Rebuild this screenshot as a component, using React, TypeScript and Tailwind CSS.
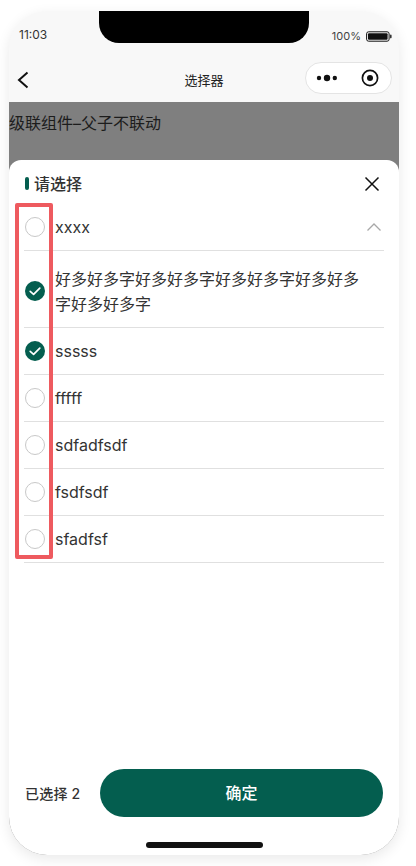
import React from "react";

const font = { fontFamily: 'Inter, "Noto Sans CJK SC", sans-serif' };

function Radio({ checked }: { checked?: boolean }) {
  if (checked) {
    return (
      <svg width="20" height="20" viewBox="0 0 20 20" className="shrink-0">
        <circle cx="10" cy="10" r="10" fill="#045e4f" />
        <path d="M5.2 10.4 L8.6 13.4 L14.8 7.2" fill="none" stroke="#fff" strokeWidth="1.7" strokeLinecap="round" strokeLinejoin="round" />
      </svg>
    );
  }
  return <div className="w-5 h-5 shrink-0 rounded-full border border-[#c8c8c8] bg-white" />;
}

function Row({ label, checked, arrow, tall }: { label: string; checked?: boolean; arrow?: boolean; tall?: boolean }) {
  return (
    <div className={`flex items-center border-b border-[#e0e0e0] ${tall ? "h-[77px]" : "h-[47px]"}`}>
      <div className={tall ? "pt-[4px] flex ml-[1px]" : "flex ml-[1px]"}>
        <Radio checked={checked} />
      </div>
      <div className={`ml-[10px] flex-1 text-[16px] text-[#333] ${tall ? "leading-[25px] pt-[6px] mr-[20px]" : "leading-[24px] mt-[-1px]"}`}>{label}</div>
      {arrow && (
        <svg width="16" height="10" viewBox="0 0 16 10" className="mr-[2px] mt-[-1px]">
          <path d="M1.5 8.5 L8 2 L14.5 8.5" fill="none" stroke="#a8a8a8" strokeWidth="1.3" />
        </svg>
      )}
    </div>
  );
}

export default function App() {
  return (
    <div className="w-[416px] h-[866px] bg-white overflow-hidden pt-[11px] pl-[9px]" style={font}>
      <div className="relative w-[390px] h-[844px] rounded-[38px] overflow-hidden bg-[#f8f8f8] flex flex-col shadow-[0_4px_14px_rgba(0,0,0,0.09)]">
        {/* notch */}
        <div className="absolute left-[90px] top-0 w-[210px] h-[32px] bg-black rounded-b-[20px] z-10" />
        {/* status bar */}
        <div className="h-[44px] shrink-0 flex items-center justify-between pl-[10px] pr-[7px] pt-[2px]">
          <span className="text-[12px] text-[#333] mt-[2px]">11:03</span>
          <div className="flex items-center gap-[5px] mt-[4px]">
            <span className="text-[11px] text-[#444]">100%</span>
            <svg width="26" height="11" viewBox="0 0 26 11">
              <rect x="0.6" y="0.8" width="22.5" height="9.4" rx="2" fill="none" stroke="#111" strokeWidth="1" />
              <rect x="2" y="2.2" width="19.6" height="6.6" rx="1" fill="#111" />
              <rect x="24" y="3.6" width="1.6" height="3.8" rx="0.8" fill="#333" />
            </svg>
          </div>
        </div>
        {/* nav bar */}
        <div className="h-[47px] shrink-0 relative flex items-center justify-between pl-[7px] pr-[7px]">
          <svg width="14" height="20" viewBox="0 0 14 20" className="mt-[2px]">
            <path d="M11.5 2.5 L3 10 L11.5 17.5" fill="none" stroke="#111" strokeWidth="2" />
          </svg>
          <span className="absolute left-0 right-0 text-center text-[13px] text-[#222] mt-[5px]">选择器</span>
          <div className="w-[87px] h-[32px] mt-[-1px] rounded-full border border-[#e4e4e4] bg-white flex items-center justify-between pl-[10px] pr-[12px]">
            <svg width="24" height="8" viewBox="0 0 24 8">
              <circle cx="3" cy="4" r="2.2" fill="#111" />
              <circle cx="11" cy="4" r="3.2" fill="#111" />
              <circle cx="18.8" cy="4" r="2.2" fill="#111" />
            </svg>
            <svg width="18" height="18" viewBox="0 0 18 18">
              <circle cx="9" cy="9" r="7.6" fill="none" stroke="#111" strokeWidth="1.7" />
              <circle cx="9" cy="9" r="3" fill="#111" />
            </svg>
          </div>
        </div>
        {/* page content under mask */}
        <div className="flex-1 bg-[#7f7f7f] relative">
          <div className="h-[58px] text-[16px] leading-[42px] text-[#1c1c1c]">级联组件–父子不联动</div>
          {/* sheet */}
          <div className="absolute left-0 right-0 top-[58px] bottom-0 bg-white rounded-t-[12px] flex flex-col px-[15px]">
            <div className="h-[44px] shrink-0 flex items-center justify-between">
              <div className="flex items-center gap-[5px] mt-[3px]">
                <div className="w-[4px] h-[13px] rounded-full bg-[#045e4f] ml-[1px]" />
                <span className="text-[16px] font-medium text-[#333]">请选择</span>
              </div>
              <svg width="16" height="16" viewBox="0 0 16 16" className="mr-[4px] mt-[4px]">
                <path d="M1.5 1.5 L14.5 14.5 M14.5 1.5 L1.5 14.5" fill="none" stroke="#111" strokeWidth="1.5" />
              </svg>
            </div>
            <Row label="xxxx" arrow />
            <Row label="好多好多字好多好多字好多好多字好多好多字好多好多字" checked tall />
            <Row label="sssss" checked />
            <Row label="fffff" />
            <Row label="sdfadfsdf" />
            <Row label="fsdfsdf" />
            <Row label="sfadfsf" />
            <div className="flex-1" />
            <div className="shrink-0 flex items-center justify-between mb-[38px] pl-[1px] pr-[1px]">
              <span className="text-[14px] font-medium text-[#333] tracking-[0.2px]">已选择 2</span>
              <div className="w-[283px] h-[48px] rounded-full bg-[#045e4f] text-white text-[16px] font-medium flex items-center justify-center">确定</div>
            </div>
          </div>
          {/* home indicator */}
          <div className="absolute left-[137px] bottom-[7px] w-[117px] h-[6px] rounded-full bg-[#111]" />
          {/* red annotation */}
          <div className="absolute left-[6px] top-[101px] w-[38px] h-[356px] border-[4px] border-[#ee5a5f] rounded-[2px]" />
        </div>
      </div>
    </div>
  );
}
